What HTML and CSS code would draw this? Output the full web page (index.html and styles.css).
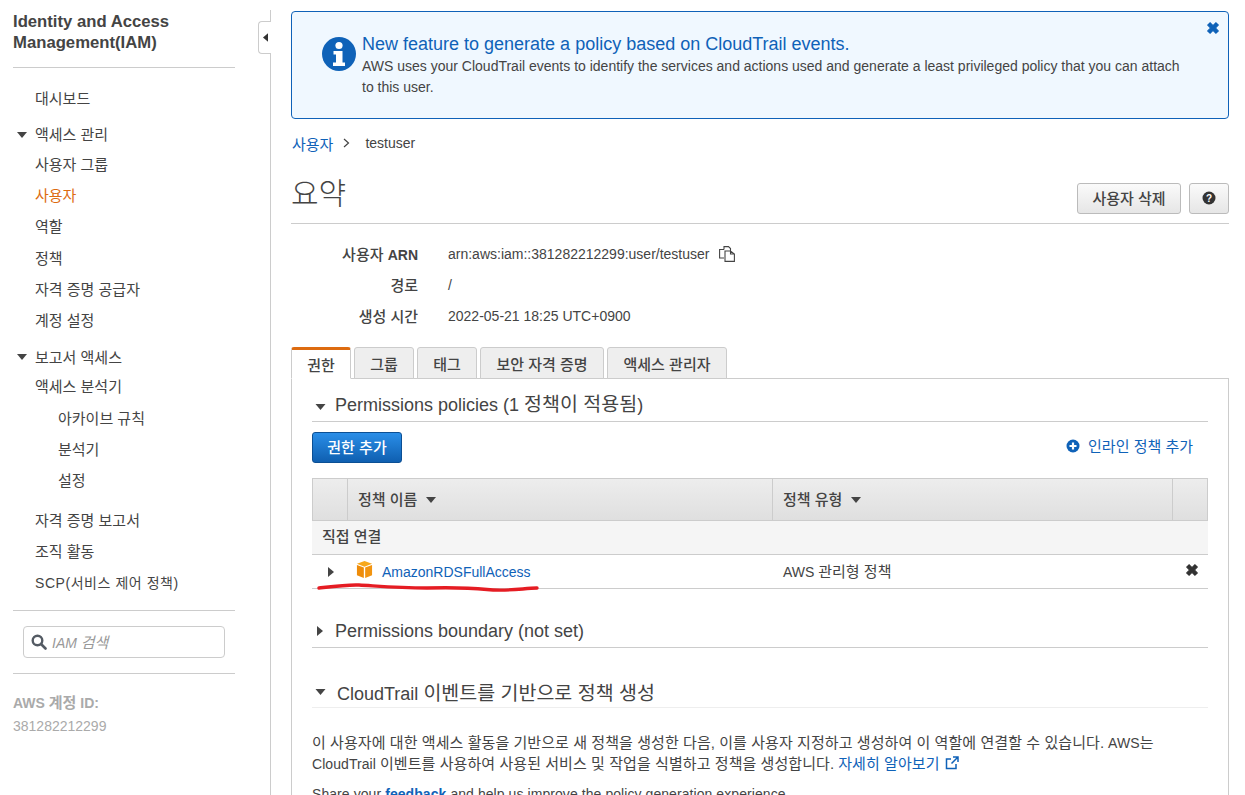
FILE: index.html
```html
<!DOCTYPE html>
<html lang="ko">
<head>
<meta charset="utf-8">
<title>IAM</title>
<link rel="stylesheet" href="styles.css">
</head>
<body>
<div class="app">
  <aside class="sidebar">
    <h1 class="side-title">Identity and Access Management(IAM)</h1>
    <hr class="side-rule">
    <nav class="nav">
      <a class="nav-item nav-dash">대시보드</a>
      <div class="nav-group">
        <a class="nav-item nav-head"><svg class="caret-down-s" viewBox="0 0 10 6"><path d="M0 0h10L5 6z"/></svg>액세스 관리</a>
        <a class="nav-item">사용자 그룹</a>
        <a class="nav-item nav-active">사용자</a>
        <a class="nav-item">역할</a>
        <a class="nav-item">정책</a>
        <a class="nav-item">자격 증명 공급자</a>
        <a class="nav-item">계정 설정</a>
      </div>
      <div class="nav-group">
        <a class="nav-item nav-head"><svg class="caret-down-s" viewBox="0 0 10 6"><path d="M0 0h10L5 6z"/></svg>보고서 액세스</a>
        <a class="nav-item">액세스 분석기</a>
        <a class="nav-item nav-sub">아카이브 규칙</a>
        <a class="nav-item nav-sub">분석기</a>
        <a class="nav-item nav-sub">설정</a>
        <a class="nav-item nav-gap">자격 증명 보고서</a>
        <a class="nav-item">조직 활동</a>
        <a class="nav-item nav-scp">SCP(서비스 제어 정책)</a>
      </div>
    </nav>
    <hr class="side-rule rule-search-top">
    <div class="search">
      <svg class="search-icon" viewBox="0 0 16 16"><circle cx="6.500" cy="6.500" r="4.800" fill="none" stroke="#545b64" stroke-width="2.400"/><path d="M10 10l4.500 4.500" stroke="#545b64" stroke-width="2.600" stroke-linecap="round"/></svg>
      <span class="search-text">IAM <span class="ko">검색</span></span>
    </div>
    <hr class="side-rule rule-search-bottom">
    <div class="account-label">AWS <span class="ko">계정</span> ID:</div>
    <div class="account-id">381282212299</div>
  </aside>
  <div class="collapse"><svg class="collapse-icon" viewBox="0 0 6 10"><path d="M6 0v10L0 5z"/></svg></div>
  <main class="main">
    <section class="banner">
      <svg class="banner-icon" viewBox="0 0 34 34"><circle cx="17" cy="17" r="17" fill="#0f62b8"/><circle cx="17" cy="8.500" r="3.600" fill="#fff"/><path d="M11.500 14h9v11.500h2.500V29H11v-3.500h3v-8h-2.500z" fill="#fff"/></svg>
      <div class="banner-body">
        <div class="banner-title">New feature to generate a policy based on CloudTrail events.</div>
        <p class="banner-text">AWS uses your CloudTrail events to identify the services and actions used and generate a least privileged policy that you can attach to this user.</p>
      </div>
      <svg class="banner-close" viewBox="0 0 12 12"><path d="M1.500 3.500l2-2L6 4l2.500-2.500 2 2L8 6l2.500 2.500-2 2L6 8l-2.500 2.500-2-2L4 6z" fill="#0f62b8" stroke="#0f62b8"/></svg>
    </section>
    <div class="crumbs"><a class="crumb-link ko">사용자</a><svg class="crumb-sep" viewBox="0 0 7 10"><path d="M1 1l4.500 4L1 9" fill="none" stroke="#444" stroke-width="1.200"/></svg><span>testuser</span></div>
    <header class="page-head">
      <h2 class="page-title">요약</h2>
      <div class="page-actions">
        <button class="btn">사용자 삭제</button>
        <button class="btn btn-help"><svg class="help-icon" viewBox="0 0 14 14"><circle cx="7" cy="7" r="6.500" fill="#333"/><text x="7" y="10.800" class="help-mark">?</text></svg></button>
      </div>
    </header>
    <dl class="details">
      <div class="detail-row"><dt>사용자 <span class="latin">ARN</span></dt><dd>arn:aws:iam::381282212299:user/testuser<svg class="copy-icon" viewBox="0 0 16 16"><path d="M5 3.500V.6h4.500L11.500 2.600V5M5 12H.6V3.500H5M6 5h5.500l3.900 3v7.400H6zM11.500 5v3h3.900" fill="none" stroke="#444" stroke-width="1.100"/></svg></dd></div>
      <div class="detail-row"><dt>경로</dt><dd>/</dd></div>
      <div class="detail-row"><dt>생성 시간</dt><dd>2022-05-21 18:25 UTC+0900</dd></div>
    </dl>
    <div class="tabs">
      <a class="tab tab-active">권한</a>
      <a class="tab tab-w60">그룹</a>
      <a class="tab tab-w60">태그</a>
      <a class="tab tab-w124">보안 자격 증명</a>
      <a class="tab tab-w120">액세스 관리자</a>
    </div>
    <section class="panel">
      <div class="section-head"><svg class="caret-down" viewBox="0 0 10 6"><path d="M0 0h10L5 6z"/></svg><span>Permissions policies (1 <span class="ko-lg">정책이 적용됨</span>)</span></div>
      <div class="toolbar">
        <button class="btn-primary">권한 추가</button>
        <a class="add-inline"><svg class="plus-icon" viewBox="0 0 14 14"><circle cx="7" cy="7" r="6.500" fill="#0f62b8"/><path d="M7 3.500v7M3.500 7h7" stroke="#fff" stroke-width="2.200"/></svg>인라인 정책 추가</a>
      </div>
      <div class="table">
        <div class="t-head">
          <div class="th th-expand"></div>
          <div class="th th-name"><span class="th-label">정책 이름</span><svg class="caret-th" viewBox="0 0 10 6"><path d="M0 0h10L5 6z"/></svg></div>
          <div class="th th-type"><span class="th-label">정책 유형</span><svg class="caret-th" viewBox="0 0 10 6"><path d="M0 0h10L5 6z"/></svg></div>
          <div class="th th-end"></div>
        </div>
        <div class="t-group">직접 연결</div>
        <div class="t-row">
          <div class="td-expand"><svg class="caret-right" viewBox="0 0 6 10"><path d="M0 0l6 5-6 5z"/></svg></div>
          <div class="td-name"><svg class="cube" viewBox="0 0 18 18"><path d="M9 0l8 3-8 3-8-3z" fill="#f7a81b"/><path d="M1 4.200l7.300 2.800V18L1 15z" fill="#ee8c0a"/><path d="M17 4.200L9.700 7v11l7.300-3z" fill="#f29410"/></svg><a class="policy-link">AmazonRDSFullAccess</a></div>
          <div class="td-type">AWS <span class="ko">관리형 정책</span></div>
          <div class="td-end"><svg class="row-x" viewBox="0 0 12 12"><path d="M1.500 3.500l2-2L6 4l2.500-2.500 2 2L8 6l2.500 2.500-2 2L6 8l-2.500 2.500-2-2L4 6z" fill="#333" stroke="#333"/></svg></div>
        </div>
        <svg class="scribble" viewBox="0 0 222 12"><path d="M2 6C15 4.500 30 2.500 42 3 60 4 80 6 110 6 130 5.500 150 5.500 170 7.500 190 9.500 205 6.500 220 6" fill="none" stroke="#e51c23" stroke-width="3.400" stroke-linecap="round"/></svg>
      </div>
      <div class="section-head head-boundary"><svg class="caret-right-h" viewBox="0 0 6 10"><path d="M0 0l6 5-6 5z"/></svg>Permissions boundary (not set)</div>
      <div class="section-head head-cloud"><svg class="caret-down" viewBox="0 0 10 6"><path d="M0 0h10L5 6z"/></svg><span>CloudTrail <span class="ko-lg">이벤트를 기반으로 정책 생성</span></span></div>
      <p class="para"><span class="ko">이 사용자에 대한 액세스 활동을 기반으로 새 정책을 생성한 다음, 이를 사용자 지정하고 생성하여 이 역할에 연결할 수 있습니다.</span> AWS<span class="ko">는</span><br>CloudTrail <span class="ko">이벤트를 사용하여 사용된 서비스 및 작업을 식별하고 정책을 생성합니다.</span> <a class="learn ko">자세히 알아보기<svg class="ext-icon" viewBox="0 0 14 14"><path d="M11 8v4.500H1.500V3H6M8 1h5v5M13 1L6.500 7.500" fill="none" stroke="#0f62b8" stroke-width="1.500"/></svg></a></p>
      <p class="share">Share your <b class="feedback">feedback</b> and help us improve the policy generation experience.</p>
    </section>
  </main>
</div>
</body>
</html>
```
FILE: styles.css
```css
* { box-sizing: border-box; }
html, body { margin: 0; height: 795px; overflow: hidden; background: #fff; }
body { font-family: "Liberation Sans", "Noto Sans CJK KR", sans-serif; font-size: 14px; color: #444; }
a { color: inherit; text-decoration: none; }
svg { display: block; flex: none; }
.ko { font-size: 15px; }
.ko-lg { font-size: 19.500px; }
.latin { font-size: 14px; }
.app { display: flex; height: 795px; position: relative; overflow: hidden; }

.sidebar { width: 271px; flex: none; border-right: 1px solid #ccc; padding: 1px 35px 0 13px; height: 785px; margin-top: 10px; }
.side-title { margin: 0; font-size: 16.700px; line-height: 21px; font-weight: bold; color: #444; }
.side-rule { margin: 14px 0 0; border: 0; border-top: 1px solid #ccc; }
.nav { padding-top: 18px; }
.nav-item { display: flex; align-items: center; height: 31.300px; padding-left: 22px; font-size: 15px; color: #444; position: relative; white-space: nowrap; }
.nav-dash { height: 22px; }
.nav-group { margin-top: 11.500px; }
.nav-group + .nav-group { margin-top: 7px; }
.nav-head { height: 28px; }
.caret-down-s { width: 10px; height: 6px; fill: #444; position: absolute; left: 4px; top: 12px; }
.nav-active { color: #dd6b10; }
.nav-sub { padding-left: 45px; }
.nav-gap { margin-top: 8px; }
.nav-scp { font-size: 14px; letter-spacing: 0.550px; }
.rule-search-top { margin-top: 12.500px; }
.search { display: flex; align-items: center; margin: 15px 10px 0; height: 32px; border: 1px solid #ccc; border-radius: 4px; padding-left: 7px; }
.search-icon { width: 16px; height: 16px; margin-right: 5px; }
.search-text { color: #999; font-style: italic; }
.rule-search-bottom { margin-top: 15px; }
.account-label { margin-top: 17px; font-weight: bold; color: #aaa; }
.account-id { margin-top: 6px; color: #aaa; }

.collapse { position: absolute; left: 258px; top: 21px; width: 13px; height: 33px; background: #fff; border: 1px solid #ccc; border-right: 0; border-radius: 4px 0 0 4px; display: flex; align-items: center; justify-content: center; }
.collapse-icon { width: 5px; height: 9px; fill: #333; }

.main { flex: 1; padding: 11px 16px 0 20px; min-width: 0; }
.banner { position: relative; display: flex; height: 108px; background: #f0f8ff; border: 1px solid #0f62b8; border-radius: 4px; padding: 21px 46px 0 30px; }
.banner-icon { width: 34px; height: 34px; margin: 4px 6px 0 0; }
.banner-title { font-size: 18px; line-height: 22px; color: #0f62b8; }
.banner-text { margin: 1px 0 0; line-height: 21px; }
.banner-close { position: absolute; right: 8px; top: 9px; width: 14px; height: 14px; }

.crumbs { display: flex; align-items: center; height: 20px; margin-top: 14px; padding-left: 1px; }
.crumb-link { color: #0f62b8; }
.crumb-sep { width: 7px; height: 10px; margin: 0 15px 0 10px; }

.page-head { display: flex; justify-content: space-between; align-items: flex-start; height: 60px; border-bottom: 1px solid #ccc; margin-top: 11px; padding-top: 19px; }
.page-title { margin: -7px 0 0; font-size: 30px; line-height: 36px; font-weight: 300; color: #444; }
.page-actions { display: flex; gap: 8px; }
.btn { height: 31px; width: 104px; padding: 0 0 2px; font: inherit; font-size: 15px; color: #444; font-weight: 500; background: linear-gradient(#fafafa, #e6e6e6); border: 1px solid #bbb; border-radius: 3px; display: flex; align-items: center; justify-content: center; }
.btn-help { width: 40px; }
.help-icon { width: 14px; height: 14px; }
.help-mark { font-size: 10px; font-weight: bold; fill: #fff; text-anchor: middle; }

.details { margin: 14px 0 0; }
.detail-row { display: flex; height: 31px; align-items: center; }
.detail-row dt { width: 127px; text-align: right; font-size: 15px; font-weight: 500; color: #444; }
.latin { font-weight: bold; }
.detail-row dd { margin: 0 0 0 30px; display: flex; align-items: center; }
.copy-icon { width: 16px; height: 16px; margin-left: 9px; }

.tabs { display: flex; gap: 3px; margin-top: 16px; height: 32px; position: relative; z-index: 1; }
.tab { display: flex; align-items: center; justify-content: center; height: 32px; border: 1px solid #ccc; border-radius: 3px 3px 0 0; background: #eee; font-size: 15px; font-weight: 500; }
.tab-active { width: 60px; background: #fff; border-top: 3px solid #dd6b10; border-bottom-color: #fff; }
.tab-w60 { width: 60px; }
.tab-w124 { width: 124px; }
.tab-w120 { width: 120px; }

.panel { border: 1px solid #ccc; margin-top: -1px; padding: 0 20px; width: 938px; height: 500px; }
.section-head { display: flex; align-items: center; font-size: 18px; line-height: 24px; height: 43px; padding: 9px 0 0 23px; border-bottom: 1px solid #ccc; position: relative; color: #444; }
.caret-down { width: 11px; height: 6px; fill: #444; position: absolute; left: 3px; top: 25px; }
.caret-right-h { width: 6px; height: 10px; fill: #444; position: absolute; left: 5px; top: 18px; }
.toolbar { display: flex; justify-content: space-between; align-items: center; margin-top: 10px; height: 31px; }
.btn-primary { width: 90px; height: 31px; padding: 0 0 2px; font: inherit; font-size: 15px; font-weight: 500; color: #fff; background: linear-gradient(#2a8ee8, #0f5fb0); border: 1px solid #0b4f94; border-radius: 3px; }
.add-inline { display: flex; align-items: center; color: #0f62b8; font-size: 15px; padding-bottom: 4px; margin-right: 15px; }
.plus-icon { width: 14px; height: 14px; margin-right: 8px; }
.table { margin-top: 15px; position: relative; }
.t-head { display: flex; height: 43px; background: linear-gradient(#ededed, #dfdfdf); border: 1px solid #ccc; }
.th { display: flex; align-items: center; font-size: 15px; font-weight: 500; border-right: 1px solid #ccc; padding: 0 0 3px 10px; }
.th-expand { width: 35px; }
.th-name { width: 425px; }
.th-type { width: 400px; }
.th-end { flex: 1; border-right: 0; }
.caret-th { width: 10px; height: 6px; fill: #444; margin-left: 9px; margin-top: 4px; }
.t-group { height: 34px; line-height: 31px; padding-left: 10px; background: #f5f5f5; border-bottom: 1px solid #ccc; font-size: 15px; font-weight: 500; }
.t-row { display: flex; align-items: center; height: 34px; border-bottom: 1px solid #ccc; }
.td-expand { width: 35px; padding-left: 16px; }
.caret-right { width: 6px; height: 10px; fill: #444; }
.td-name { width: 425px; display: flex; align-items: center; padding-left: 9px; }
.cube { width: 17px; height: 17px; margin: -5px 9px 0 0; }
.policy-link { color: #0f62b8; }
.td-type { width: 400px; padding: 0 0 3px 11px; }
.td-end { flex: 1; display: flex; justify-content: flex-end; padding: 0 9px 4px 0; }
.row-x { width: 14px; height: 14px; }
.scribble { position: absolute; left: 5px; top: 104px; width: 222px; height: 12px; }
.head-boundary { margin-top: 22px; height: 37px; padding-top: 4px; }
.head-boundary .caret-right-h { top: 15px; }
.head-cloud { margin-top: 27px; height: 33px; padding: 4px 0 0 25px; border-bottom-color: #eee; }
.head-cloud .caret-down { top: 14px; }
.para { margin: 25px 0 0; line-height: 19.500px; white-space: nowrap; letter-spacing: 0.070px; }
.learn { color: #0f62b8; display: inline-flex; align-items: center; }
.ext-icon { width: 14px; height: 14px; margin-left: 5px; }
.share { margin: 12px 0 0; letter-spacing: 0.070px; }
.feedback { color: #0f62b8; }
```
